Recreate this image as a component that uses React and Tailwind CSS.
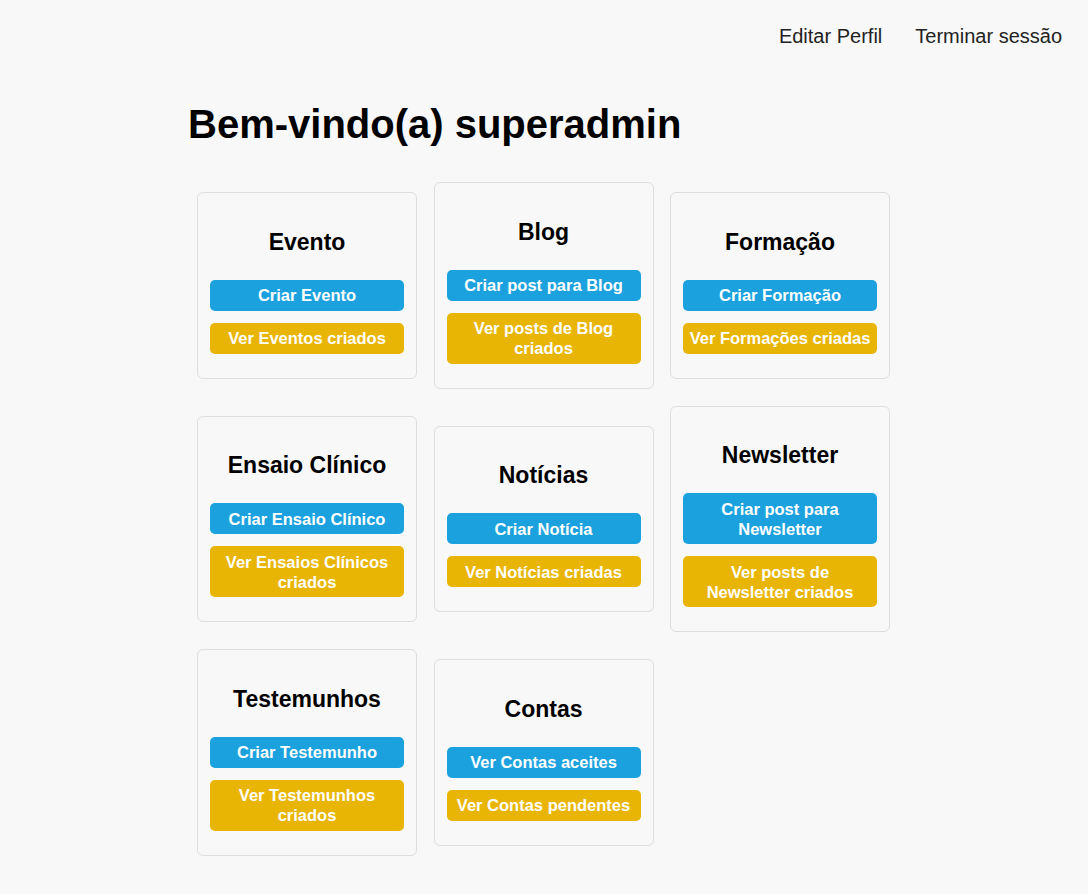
const cards = [
  { title: "Evento", create: "Criar Evento", view: "Ver Eventos criados" },
  { title: "Blog", create: "Criar post para Blog", view: "Ver posts de Blog criados" },
  { title: "Formação", create: "Criar Formação", view: "Ver Formações criadas" },
  { title: "Ensaio Clínico", create: "Criar Ensaio Clínico", view: "Ver Ensaios Clínicos criados" },
  { title: "Notícias", create: "Criar Notícia", view: "Ver Notícias criadas" },
  { title: "Newsletter", create: "Criar post para Newsletter", view: "Ver posts de Newsletter criados" },
  { title: "Testemunhos", create: "Criar Testemunho", view: "Ver Testemunhos criados" },
  { title: "Contas", create: "Ver Contas aceites", view: "Ver Contas pendentes" },
];

function Card({ title, create, view }) {
  return (
    <div className="flex flex-col rounded-md border border-[#dedede] bg-[#f8f8f8] px-3 pt-[35.5px] pb-[24px]">
      <h2 className="mb-[25px] text-center text-[23px] font-bold leading-[26px] text-black">{title}</h2>
      <button className="rounded-[5px] bg-[#1ba1de] px-1 py-[5.5px] text-center text-[16.5px] font-bold leading-5 text-white">
        {create}
      </button>
      <button className="mt-3 rounded-[5px] bg-[#e9b505] px-1 py-[5.5px] text-center text-[16.5px] font-bold leading-5 text-white">
        {view}
      </button>
    </div>
  );
}

export default function App() {
  return (
    <div className="min-h-[894px] bg-[#f8f8f8] font-['Liberation_Sans',Arial,sans-serif]">
      <nav className="flex justify-end gap-[33px] pr-[26px] pt-[25px] text-[20px] leading-[22px] text-[#222]">
        <a href="#">Editar Perfil</a>
        <a href="#">Terminar sessão</a>
      </nav>
      <main className="mx-auto w-[712px]">
        <h1 className="mt-[54px] text-[40px] font-bold leading-[46px] text-black">Bem-vindo(a) superadmin</h1>
        <div className="mt-[35px] grid grid-cols-[repeat(3,220px)] items-center gap-x-[16.5px] gap-y-[17px] px-[9px] pb-8">
          {cards.map((c) => (
            <Card key={c.title} {...c} />
          ))}
        </div>
      </main>
    </div>
  );
}
